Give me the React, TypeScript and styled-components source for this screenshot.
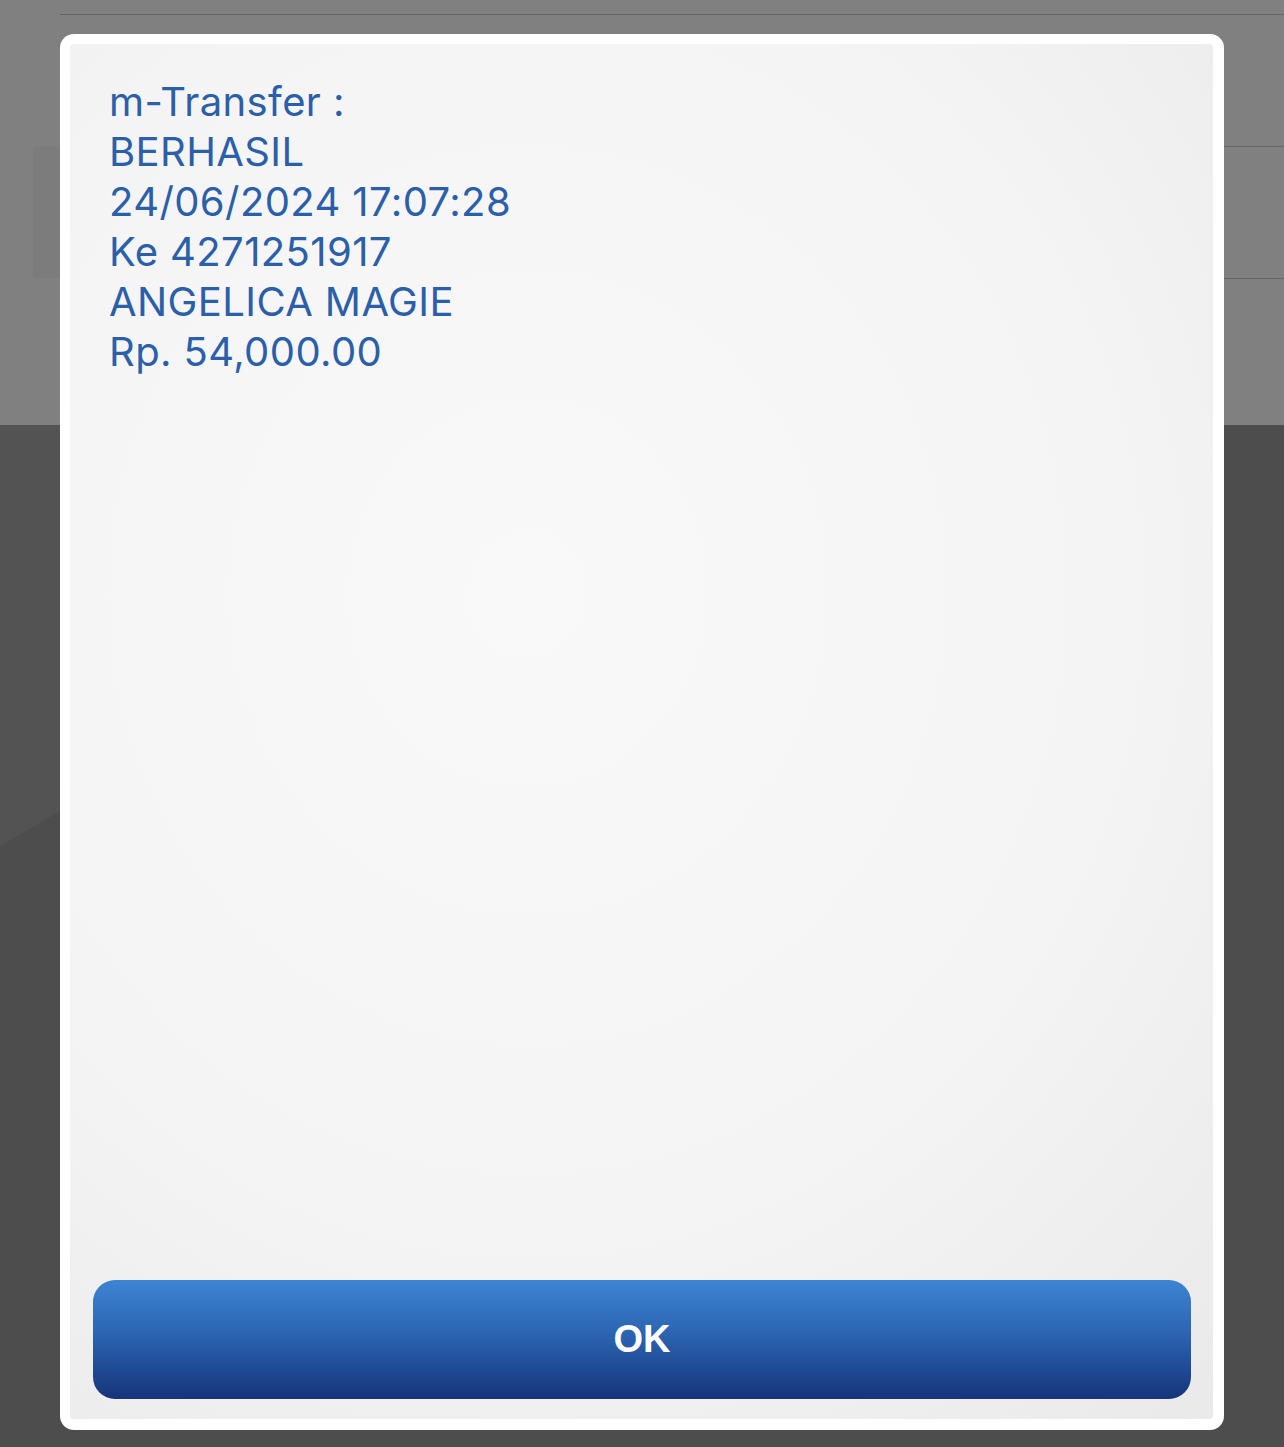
import React from "react";
import styled, { createGlobalStyle } from "styled-components";

const Global = createGlobalStyle`
  html, body { margin: 0; padding: 0; background: #505050; }
  body { overflow: hidden; font-family: Inter, "Liberation Sans", Arial, sans-serif; }
  * { box-sizing: border-box; }
`;

const Screen = styled.div`
  position: relative;
  width: 1284px;
  height: 1447px;
  display: flex;
  flex-direction: column;
  overflow: hidden;
`;

const TopArea = styled.div`
  height: 425px;
  background: #808080;
  padding-top: 14px;
  display: flex;
  flex-direction: column;
`;

const Divider = styled.div<{ $inset: number }>`
  height: 1px;
  margin-left: ${(p) => p.$inset}px;
  background: #656565;
`;

const Row = styled.div`
  height: 131px;
  display: flex;
`;

const Tile = styled.div`
  margin-left: 33px;
  width: 400px;
  background: #7c7c7c;
`;

const BottomArea = styled.div`
  flex: 1;
  background: linear-gradient(150deg, #535353 0, #535353 364px, #4d4d4d 365px);
`;

const Frame = styled.div`
  position: absolute;
  left: 60px;
  top: 34px;
  width: 1164px;
  height: 1396px;
  background: #ffffff;
  border-radius: 14px;
  padding: 10px 11px 11px 10px;
  display: flex;
`;

const Panel = styled.div`
  flex: 1;
  border-radius: 4px;
  background: radial-gradient(
    ellipse 95% 85% at 40% 40%,
    #f9f9f9 0%,
    #f4f4f4 55%,
    #e8e8e8 100%
  );
  display: flex;
  flex-direction: column;
  justify-content: space-between;
`;

const Message = styled.div`
  padding: 33px 39px 0;
  color: #2b5fa9;
  font-family: Inter, "Liberation Sans", Arial, sans-serif;
  font-size: 40px;
  line-height: 50px;
  letter-spacing: 0.4px;
`;

const Line = styled.div``;

const Actions = styled.div`
  padding: 0 22px 20px 23px;
`;

const OkButton = styled.button`
  display: flex;
  align-items: center;
  justify-content: center;
  width: 100%;
  height: 119px;
  border: none;
  border-radius: 22px;
  background: linear-gradient(180deg, #3d84d2 0%, #2c64b2 45%, #15347a 100%);
  color: #ffffff;
  font-family: "Liberation Sans", Arial, sans-serif;
  font-weight: 700;
  font-size: 38px;
  padding: 0;
`;

const lines = [
  "m-Transfer :",
  "BERHASIL",
  "24/06/2024 17:07:28",
  "Ke 4271251917",
  "ANGELICA MAGIE",
  "Rp. 54,000.00",
];

export default function App() {
  return (
    <>
      <Global />
      <Screen>
        <TopArea>
          <Divider $inset={60} />
          <Row />
          <Divider $inset={60} />
          <Row>
            <Tile />
          </Row>
          <Divider $inset={60} />
        </TopArea>
        <BottomArea />
        <Frame>
          <Panel>
            <Message>
              {lines.map((l) => (
                <Line key={l}>{l}</Line>
              ))}
            </Message>
            <Actions>
              <OkButton>OK</OkButton>
            </Actions>
          </Panel>
        </Frame>
      </Screen>
    </>
  );
}
